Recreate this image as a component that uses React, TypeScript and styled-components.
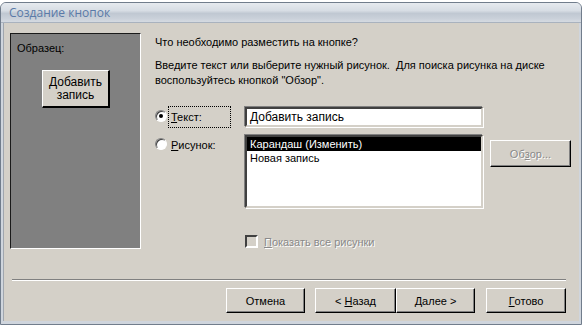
import styled, { createGlobalStyle } from 'styled-components'

const GlobalStyle = createGlobalStyle`
  html, body {
    margin: 0;
    padding: 0;
    background: #fff;
  }
  body {
    font-family: "Liberation Sans", Arial, sans-serif;
    font-size: 11px;
    color: #000;
  }
`

const Window = styled.div`
  margin-top: 2px;
  width: 582px;
  height: 323px;
  display: flex;
  flex-direction: column;
  box-sizing: border-box;
  border: 1px solid #717d8c;
  border-radius: 6px 6px 0 0;
  background: #cfd5dd;
  padding: 0 2px 3px 2px;
  overflow: hidden;
`

const TitleBar = styled.div`
  height: 19px;
  margin: 0 -2px;
  padding-left: 8px;
  display: flex;
  align-items: center;
  background: linear-gradient(#e6eaef 0%, #d7dde4 40%, #c0c8d2 55%, #c9d0d9 80%, #d5dae1 100%);
  border-bottom: 1px solid #a9b2be;
  color: #5a7aa8;
  font-family: "Open Sans", "DejaVu Sans", sans-serif;
  font-size: 12px;
`

const Client = styled.div`
  flex: 1;
  background: #d4d0c8;
  display: flex;
  flex-direction: column;
  border-left: 1px solid #a0a6ae;
`

const Main = styled.div`
  display: flex;
  padding: 10px 0 0 6px;
`

const SamplePanel = styled.div`
  width: 131px;
  height: 216px;
  box-sizing: border-box;
  background: #808080;
  border-style: solid;
  border-width: 1px;
  border-color: #1a1a1a #fff #fff #1a1a1a;
  padding: 7px 0 0 6px;
  display: flex;
  flex-direction: column;
`

const SampleLabel = styled.div`
  color: #000;
  line-height: 14px;
`

const SampleButton = styled.div`
  margin: 15px 0 0 25px;
  width: 68px;
  height: 38px;
  box-sizing: border-box;
  background: #d4d0c8;
  border-style: solid;
  border-width: 1px 2px 2px 1px;
  border-color: #fff #000 #000 #fff;
  display: flex;
  align-items: center;
  justify-content: center;
  text-align: center;
  font-size: 12px;
  line-height: 13px;
`

const RightPane = styled.div`
  margin-left: 12px;
  padding-top: 2px;
  width: 420px;
`

const Question = styled.div`
  padding-left: 2px;
  line-height: 14px;
`

const Hint = styled.div`
  padding-left: 2px;
  margin-top: 9px;
  line-height: 15px;
`

const OptionsGrid = styled.div`
  margin-top: 19px;
  display: grid;
  grid-template-columns: 92px 238px 88px;
  row-gap: 8px;
  align-items: start;
`

const OptionCell = styled.div`
  display: flex;
  align-items: center;
`

const Radio = styled.span<{ $checked?: boolean }>`
  width: 12px;
  height: 12px;
  margin: -3px 0 0 2px;
  box-sizing: border-box;
  border-radius: 50%;
  background: #fff;
  border: 1px solid;
  border-color: #808080 #fff #fff #808080;
  box-shadow: inset 1px 1px 0 #404040;
  display: flex;
  align-items: center;
  justify-content: center;
  &::after {
    content: '';
    width: 4px;
    height: 4px;
    border-radius: 50%;
    background: ${p => (p.$checked ? '#000' : 'transparent')};
  }
`

const OptionLabel = styled.span<{ $focused?: boolean }>`
  margin-left: 2px;
  padding: 3px 2px;
  width: 57px;
  height: 14px;
  line-height: 14px;
  outline: ${p => (p.$focused ? '1px dotted #000' : 'none')};
`

const Sunken = styled.div`
  box-sizing: border-box;
  background: #fff;
  border-style: solid;
  border-width: 2px;
  border-color: #404040 #d4d0c8 #d4d0c8 #404040;
  box-shadow: 1px 1px 0 #fff, -1px -1px 0 #808080;
`

const TextField = styled(Sunken)`
  height: 20px;
  padding: 0 3px;
  display: flex;
  align-items: center;
  font-size: 12px;
`

const ListBox = styled(Sunken)`
  height: 73px;
  font-size: 11px;
`

const ListItem = styled.div<{ $selected?: boolean }>`
  height: 14px;
  line-height: 14px;
  padding-left: 3px;
  background: ${p => (p.$selected ? '#000' : 'transparent')};
  color: ${p => (p.$selected ? '#fff' : '#000')};
`

const Button = styled.div<{ $width?: number; $disabled?: boolean }>`
  width: ${p => p.$width ?? 80}px;
  height: 25px;
  box-sizing: border-box;
  background: #d4d0c8;
  border-style: solid;
  border-width: 1px;
  border-color: #fff #000 #000 #fff;
  box-shadow: inset -1px -1px 0 #808080;
  display: flex;
  align-items: center;
  justify-content: center;
  white-space: pre;
  font-size: 11px;
  color: ${p => (p.$disabled ? '#8a8a8a' : '#000')};
  text-shadow: ${p => (p.$disabled ? '1px 1px 0 #fff' : 'none')};
`

const BrowseButton = styled(Button)`
  margin: 5px 0 0 7px;
  height: 27px;
`

const CheckRow = styled.div`
  grid-column: 2 / 4;
  margin-top: 19px;
  display: flex;
  align-items: center;
  color: #8a8a8a;
  text-shadow: 1px 1px 0 #fff;
`

const CheckBox = styled.span`
  width: 13px;
  height: 13px;
  box-sizing: border-box;
  border-style: solid;
  border-width: 2px;
  border-color: #404040 #fff #fff #404040;
  background: #d4d0c8;
  margin-right: 6px;
`

const Separator = styled.div`
  margin: 30px 13px 0 8px;
  height: 0;
  border-top: 1px solid #808080;
  border-bottom: 1px solid #fff;
`

const ButtonRow = styled.div`
  margin: 7px 13px 0 0;
  display: flex;
  justify-content: flex-end;
`

const ButtonGroup = styled.div<{ $gap: number }>`
  display: flex;
  margin-left: ${p => p.$gap}px;
`

const U = styled.span`
  text-decoration: underline;
`

export default function App() {
  return (
    <>
      <GlobalStyle />
      <Window>
        <TitleBar>Создание кнопок</TitleBar>
        <Client>
          <Main>
            <SamplePanel>
              <SampleLabel>Образец:</SampleLabel>
              <SampleButton>
                Добавить
                <br />
                запись
              </SampleButton>
            </SamplePanel>
            <RightPane>
              <Question>Что необходимо разместить на кнопке?</Question>
              <Hint>
                Введите текст или выберите нужный рисунок.&nbsp; Для поиска рисунка на диске
                <br />
                воспользуйтесь кнопкой "Обзор".
              </Hint>
              <OptionsGrid>
                <OptionCell>
                  <Radio $checked />
                  <OptionLabel $focused>
                    <U>Т</U>екст:
                  </OptionLabel>
                </OptionCell>
                <TextField>Добавить запись</TextField>
                <div />
                <OptionCell>
                  <Radio />
                  <OptionLabel>
                    <U>Р</U>исунок:
                  </OptionLabel>
                </OptionCell>
                <ListBox>
                  <ListItem $selected>Карандаш (Изменить)</ListItem>
                  <ListItem>Новая запись</ListItem>
                </ListBox>
                <BrowseButton $width={81} $disabled>
                  Об<U>з</U>ор...
                </BrowseButton>
                <div />
                <CheckRow>
                  <CheckBox />
                  <span>
                    <U>П</U>оказать все рисунки
                  </span>
                </CheckRow>
              </OptionsGrid>
            </RightPane>
          </Main>
          <Separator />
          <ButtonRow>
            <Button $width={79}>Отмена</Button>
            <ButtonGroup $gap={10}>
              <Button $width={81}>
                {'< '}
                <U>Н</U>азад
              </Button>
              <Button $width={79}>
                <U>Д</U>алее{' >'}
              </Button>
            </ButtonGroup>
            <ButtonGroup $gap={11}>
              <Button $width={80}>
                <U>Г</U>отово
              </Button>
            </ButtonGroup>
          </ButtonRow>
        </Client>
      </Window>
    </>
  )
}
